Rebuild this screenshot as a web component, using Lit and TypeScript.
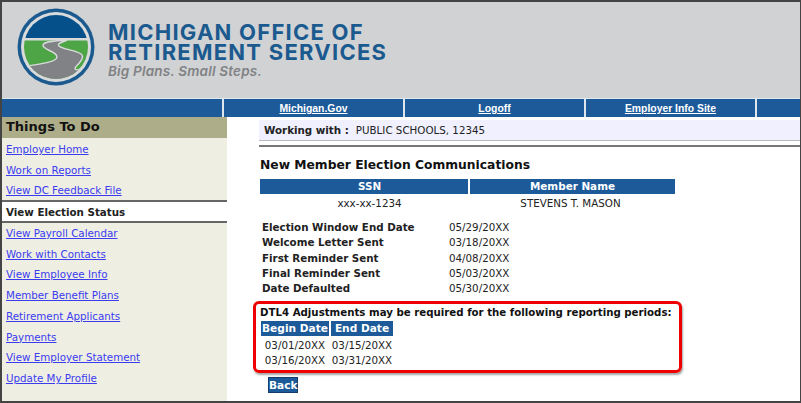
import { LitElement, html, css } from 'lit';
import { customElement } from 'lit/decorators.js';

const LINKS_TOP = ['Employer Home', 'Work on Reports', 'View DC Feedback File'];
const LINKS_BOTTOM = [
  'View Payroll Calendar',
  'Work with Contacts',
  'View Employee Info',
  'Member Benefit Plans',
  'Retirement Applicants',
  'Payments',
  'View Employer Statement',
  'Update My Profile',
];
const DATES = [
  ['Election Window End Date', '05/29/20XX'],
  ['Welcome Letter Sent', '03/18/20XX'],
  ['First Reminder Sent', '04/08/20XX'],
  ['Final Reminder Sent', '05/03/20XX'],
  ['Date Defaulted', '05/30/20XX'],
];
const PERIODS = [
  ['03/01/20XX', '03/15/20XX'],
  ['03/16/20XX', '03/31/20XX'],
];

@customElement('app-root')
export class AppRoot extends LitElement {
  static styles = css`
    :host {
      display: block;
      width: 801px;
      height: 403px;
      font-family: 'DejaVu Sans', Verdana, sans-serif;
      font-size: 10.3px;
      color: #222;
      overflow: hidden;
    }
    .frame {
      box-sizing: border-box;
      width: 801px;
      height: 403px;
      border: 1px solid #444;
      border-width: 2px 1px 2px 2px;
      background: #fff;
      display: flex;
      flex-direction: column;
    }
    .header {
      height: 96px;
      background: #d1d2d4;
      display: flex;
      align-items: flex-start;
      flex: none;
    }
    .logo {
      margin: 6px 0 0 15px;
      flex: none;
    }
    .brand {
      margin: 20px 0 0 13px;
      font-family: Inter, sans-serif;
      color: #1b5a8f;
    }
    .brand-name {
      font-size: 22px;
      font-weight: 700;
      line-height: 20px;
      letter-spacing: 1.25px;
      white-space: nowrap;
    }
    .brand-tag {
      font-size: 13.5px;
      font-style: italic;
      font-weight: 600;
      color: #808285;
      line-height: 16px;
      margin-top: 1px;
      letter-spacing: 0.2px;
    }
    .nav {
      height: 19px;
      flex: none;
      background: #1c5a9a;
      border-top: 1px solid #dfe6ee;
      box-sizing: border-box;
      display: flex;
    }
    .nav div {
      box-sizing: border-box;
      border-right: 2px solid #dfe6ee;
      color: #fff;
      font-family: 'Liberation Sans', Arial, sans-serif;
      font-size: 10.4px;
      font-weight: 700;
      text-align: center;
      text-decoration: underline;
      line-height: 19px;
    }
    .nav .n0 { width: 222px; }
    .nav .n1 { width: 181px; }
    .nav .n2 { width: 181px; }
    .nav .n3 { width: 171px; }
    .body {
      flex: 1;
      display: flex;
      min-height: 0;
    }
    .side {
      width: 225px;
      flex: none;
      background: #eeeee2;
    }
    .side h2 {
      margin: 0;
      height: 21px;
      line-height: 20px;
      padding-left: 4px;
      background: #adad8a;
      color: #111;
      font-size: 13px;
      font-weight: 700;
    }
    .side ul {
      list-style: none;
      margin: 0;
      padding: 0;
    }
    .side li {
      height: 20.7px;
      line-height: 20.7px;
      padding-left: 4px;
      color: #3b3bf0;
      text-decoration: underline;
      white-space: nowrap;
    }
    .side li.top {
      box-sizing: border-box;
      padding-top: 1px;
    }
    .side .active {
      box-sizing: border-box;
      height: 23px;
      line-height: 20px;
      background: #fff;
      color: #222;
      font-weight: 700;
      text-decoration: none;
      border-top: 2px solid #666;
      border-bottom: 2px solid #666;
    }
    .main {
      flex: 1;
      padding: 3px 0 0 32px;
      min-width: 0;
    }
    .working {
      height: 20px;
      line-height: 20px;
      background: #f0f0ff;
      padding-left: 5px;
      white-space: nowrap;
      display: flex;
      gap: 7px;
      border-bottom: 1px solid #bbb;
    }
    .working b { font-weight: 700; }
    .rule {
      height: 2px;
      background: #777;
      margin-top: 4px;
    }
    h1 {
      margin: 10px 0 0 1px;
      font-size: 12.3px;
      line-height: 16px;
      font-weight: 700;
      color: #111;
    }
    .member {
      margin: 6px 0 0 1px;
      width: 415px;
      display: grid;
      grid-template-columns: 208px 205px;
      column-gap: 2px;
    }
    .member .th {
      background: #1c5a9a;
      color: #fff;
      font-weight: 700;
      font-size: 10.4px;
      line-height: 15px;
      text-align: center;
    }
    .member .td {
      line-height: 19px;
      text-align: center;
    }
    .member .ssn { padding-left: 11px; box-sizing: border-box; }
    .member .name { padding-right: 4px; box-sizing: border-box; }
    .dates {
      margin: 7px 0 0 3px;
      display: grid;
      grid-template-columns: 187px auto;
      grid-auto-rows: 15.25px;
      line-height: 15.25px;
    }
    .callout {
      box-sizing: border-box;
      margin: 5px 0 0 -6px;
      width: 429px;
      height: 72px;
      border: 3px solid #ee0000;
      border-radius: 6px;
      box-shadow: 1px 2px 2px rgba(0, 0, 0, 0.35);
      padding: 2px 0 0 4px;
    }
    .callout p {
      margin: 0;
      font-size: 10.22px;
      line-height: 14px;
      font-weight: 700;
      color: #111;
      white-space: nowrap;
    }
    .periods {
      margin: 1px 0 0 1px;
      display: grid;
      grid-template-columns: 68px 62px;
      column-gap: 2px;
      width: 132px;
    }
    .periods .th {
      background: #1c5a9a;
      color: #fff;
      font-weight: 700;
      font-size: 10.6px;
      line-height: 15px;
      text-align: center;
      white-space: nowrap;
    }
    .periods .td {
      line-height: 15px;
      text-align: center;
      white-space: nowrap;
    }
    .periods .r1 { margin-top: 2px; }
    .back {
      display: block;
      box-sizing: border-box;
      margin: 4px 0 0 9px;
      padding: 0;
      width: 30px;
      height: 16px;
      border: 1px solid #123c6a;
      background: #1c5a9a;
      color: #fff;
      font-family: inherit;
      font-size: 10.6px;
      font-weight: 700;
      line-height: 14px;
      text-align: center;
    }
  `;

  private renderLogo() {
    return html`
      <svg class="logo" width="78" height="78" viewBox="0 0 78 78">
        <defs>
          <clipPath id="disc"><circle cx="39" cy="39" r="32"></circle></clipPath>
        </defs>
        <circle cx="39" cy="39" r="38.5" fill="#1b5a8f"></circle>
        <circle cx="39" cy="39" r="35" fill="#d9dadb"></circle>
        <g clip-path="url(#disc)">
          <rect x="0" y="0" width="78" height="30" fill="#05508a"></rect>
          <rect x="0" y="32.5" width="78" height="40" fill="#4ea546"></rect>
          <path
            d="M4 59 C24 56 40 54 40 49 C40 43 25 42 26 37 C27 33 40 33 50 32 C44 35 40 35 42 38 C46 42 62 42 65 47 C68 52 59 57 58 60 C58 63 62 62 64 60 L76 48 L76 80 L0 80 Z"
            fill="#808285"
            stroke="#d9dadb"
            stroke-width="1.4"
          ></path>
        </g>
      </svg>
    `;
  }

  render() {
    return html`
      <div class="frame">
        <header class="header">
          ${this.renderLogo()}
          <div class="brand">
            <div class="brand-name">MICHIGAN OFFICE OF<br />RETIREMENT SERVICES</div>
            <div class="brand-tag">Big Plans. Small Steps.</div>
          </div>
        </header>
        <nav class="nav">
          <div class="n0"></div>
          <div class="n1">Michigan.Gov</div>
          <div class="n2">Logoff</div>
          <div class="n3">Employer Info Site</div>
        </nav>
        <div class="body">
          <aside class="side">
            <h2>Things To Do</h2>
            <ul>
              ${LINKS_TOP.map((l) => html`<li class="top">${l}</li>`)}
              <li class="active">View Election Status</li>
              ${LINKS_BOTTOM.map((l) => html`<li>${l}</li>`)}
            </ul>
          </aside>
          <main class="main">
            <div class="working"><b>Working with :</b><span>PUBLIC SCHOOLS, 12345</span></div>
            <div class="rule"></div>
            <h1>New Member Election Communications</h1>
            <div class="member">
              <div class="th ssn">SSN</div>
              <div class="th">Member Name</div>
              <div class="td ssn">xxx-xx-1234</div>
              <div class="td name">STEVENS T. MASON</div>
            </div>
            <div class="dates">
              ${DATES.map(([k, v]) => html`<b>${k}</b><span>${v}</span>`)}
            </div>
            <section class="callout">
              <p>DTL4 Adjustments may be required for the following reporting periods:</p>
              <div class="periods">
                <div class="th">Begin Date</div>
                <div class="th">End Date</div>
                ${PERIODS.map(
                  ([a, b], i) => html`
                    <div class="td ${i === 0 ? 'r1' : ''}">${a}</div>
                    <div class="td ${i === 0 ? 'r1' : ''}">${b}</div>
                  `,
                )}
              </div>
            </section>
            <button class="back">Back</button>
          </main>
        </div>
      </div>
    `;
  }
}
